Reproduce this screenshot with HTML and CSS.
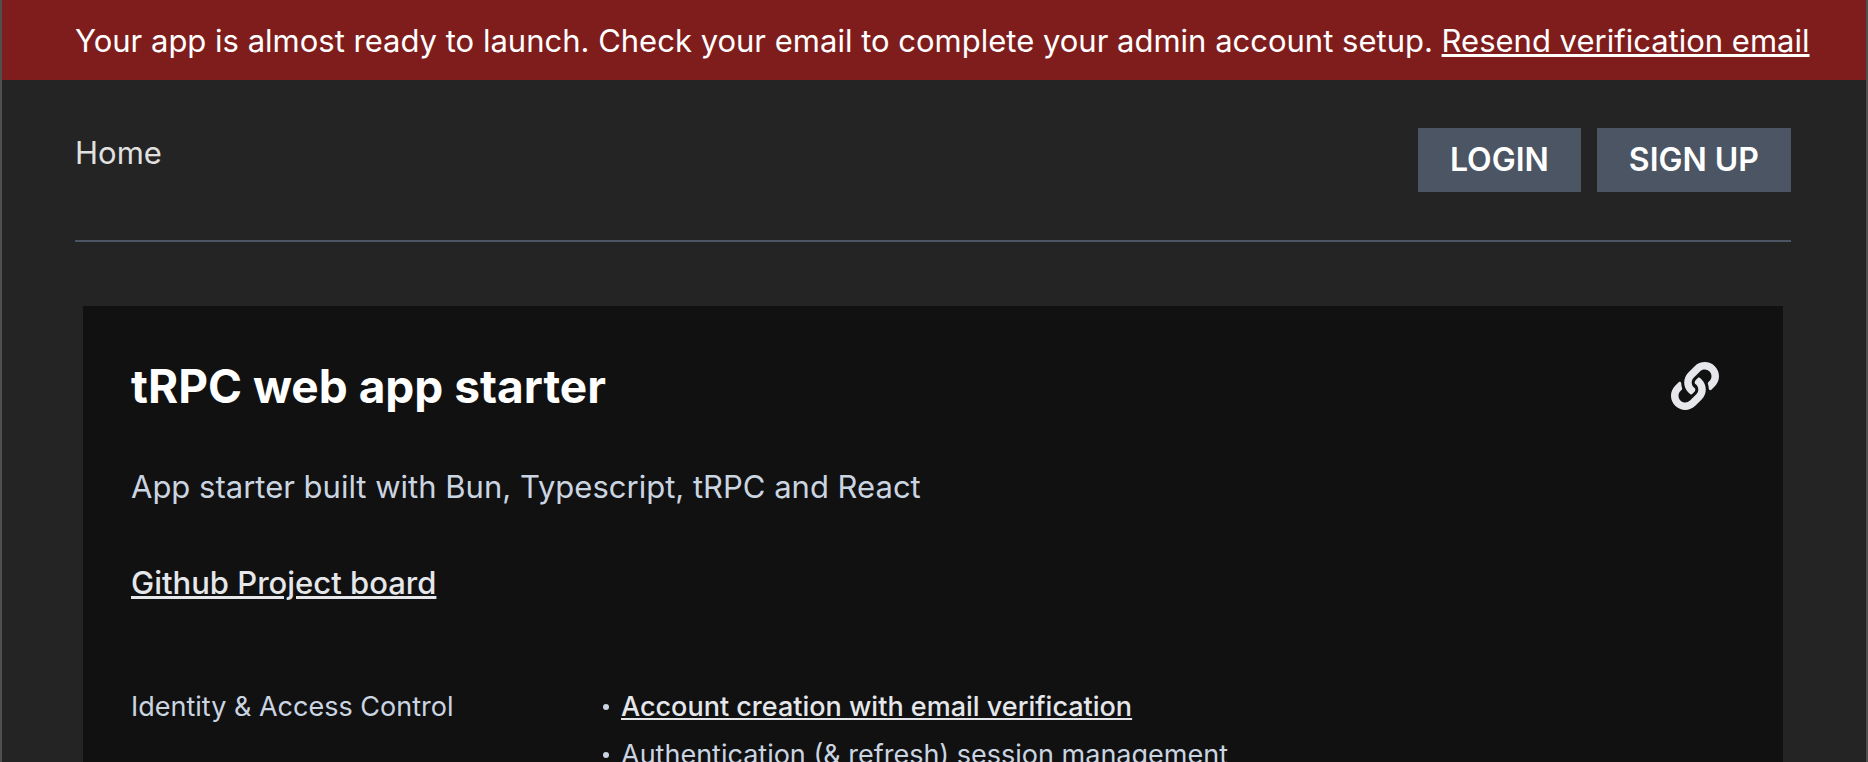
FILE: index.html
```html
<!DOCTYPE html>
<html lang="en">
<head>
<meta charset="utf-8">
<meta name="viewport" content="width=device-width, initial-scale=1">
<title>tRPC web app starter</title>
<link rel="stylesheet" href="styles.css">
</head>
<body>
<div class="app">
  <div class="banner" role="status">
    <p>Your app is almost ready to launch. Check your email to complete your admin account setup. <a href="#resend">Resend verification email</a></p>
  </div>
  <div class="page">
    <header class="header">
      <nav><a class="nav-link" href="#home">Home</a></nav>
      <div class="actions">
        <button class="button" type="button">LOGIN</button>
        <button class="button" type="button">SIGN UP</button>
      </div>
    </header>
    <main class="card">
      <div class="card-head">
        <h1>tRPC web app starter</h1>
        <a class="icon-link" href="#project" aria-label="Project link">
          <svg viewBox="0 0 512 512" aria-hidden="true"><path fill="currentColor" d="M326.612 185.391c59.747 59.809 58.927 155.698.36 214.59-.11.12-.24.25-.36.37l-67.2 67.2c-59.27 59.27-155.699 59.262-214.96 0-59.27-59.26-59.27-155.7 0-214.96l37.106-37.106c9.84-9.84 26.786-3.3 27.294 10.606.648 17.722 3.826 35.527 9.69 52.721 1.986 5.822.567 12.262-3.783 16.612l-13.087 13.087c-28.026 28.026-28.905 73.66-1.155 101.96 28.024 28.579 74.086 28.749 102.325.51l67.2-67.19c28.191-28.191 28.073-73.757 0-101.83-3.701-3.694-7.429-6.564-10.341-8.569a16.037 16.037 0 0 1-6.947-12.606c-.396-10.567 3.348-21.456 11.698-29.806l21.054-21.055c5.521-5.521 14.182-6.199 20.584-1.731a152.482 152.482 0 0 1 20.522 17.197zM467.547 44.449c-59.261-59.262-155.69-59.27-214.96 0l-67.2 67.2c-.12.12-.25.25-.36.37-58.566 58.892-59.387 154.781.36 214.59a152.454 152.454 0 0 0 20.521 17.196c6.402 4.468 15.064 3.789 20.584-1.731l21.054-21.055c8.35-8.35 12.094-19.239 11.698-29.806a16.037 16.037 0 0 0-6.947-12.606c-2.912-2.005-6.64-4.875-10.341-8.569-28.073-28.073-28.191-73.639 0-101.83l67.2-67.19c28.239-28.239 74.3-28.069 102.325.51 27.75 28.3 26.872 73.934-1.155 101.96l-13.087 13.087c-4.35 4.35-5.769 10.79-3.783 16.612 5.864 17.194 9.042 34.999 9.69 52.721.509 13.906 17.454 20.446 27.294 10.606l37.106-37.106c59.271-59.259 59.271-155.699.001-214.959z"/></svg>
        </a>
      </div>
      <p class="lead">App starter built with Bun, Typescript, tRPC and React</p>
      <p class="board"><a href="#board">Github Project board</a></p>
      <section class="feature">
        <h2>Identity &amp; Access Control</h2>
        <ul>
          <li><a href="#account">Account creation with email verification</a></li>
          <li>Authentication (&amp; refresh) session management</li>
        </ul>
      </section>
    </main>
  </div>
</div>
</body>
</html>
```
FILE: styles.css
```css
* {
  box-sizing: border-box;
}

body {
  margin: 0;
  height: 100vh;
  overflow: hidden;
  background: #242424;
  color: #cbd5e1;
  font-family: Inter, "Liberation Sans", sans-serif;
  font-size: 31px;
  line-height: 50px;
}

h1, h2, p, ul {
  margin: 0;
}

a {
  color: #e5e7eb;
}

.app {
  min-height: 100vh;
  border: solid rgba(255, 255, 255, 0.2);
  border-width: 0 2px;
}

.banner {
  padding: 16px 48px 14px 73px;
  background: #7f1d1d;
  color: #fff;
}

.banner a {
  color: inherit;
}

.page {
  padding: 0 75px 0 73px;
}

.header {
  display: flex;
  justify-content: space-between;
  align-items: flex-start;
  padding: 48px 0;
  border-bottom: 2px solid #4b5563;
}

.nav-link {
  color: #e0e0e0;
  text-decoration: none;
}

.actions {
  display: flex;
  gap: 16px;
}

.button {
  height: 64px;
  padding: 0 32px;
  border: 0;
  background: #4b5563;
  color: #fff;
  font: inherit;
  font-size: 32px;
  font-weight: 600;
}

.card {
  margin: 64px 8px 0;
  padding: 48px;
  background: #111;
}

.card-head {
  display: flex;
  justify-content: space-between;
  align-items: center;
}

h1 {
  color: #fff;
  font-size: 46px;
  font-weight: 700;
  line-height: 64px;
}

.icon-link {
  display: flex;
  padding: 8px 16px;
}

.icon-link svg {
  width: 48px;
  height: 48px;
}

.lead {
  margin-top: 44px;
}

.board {
  margin-top: 46px;
  font-weight: 500;
}

.feature {
  display: grid;
  grid-template-columns: minmax(auto, 472px) 1fr;
  margin-top: 75px;
  font-size: 27px;
  line-height: 48px;
}

h2 {
  font-size: 27px;
  font-weight: 400;
}

ul {
  padding: 0;
  list-style: none;
}

li {
  display: flex;
  align-items: center;
  gap: 12px;
}

li::before {
  content: "";
  width: 6px;
  height: 6px;
  border-radius: 50%;
  background: #cbd5e1;
}

li a {
  font-weight: 500;
}
```
